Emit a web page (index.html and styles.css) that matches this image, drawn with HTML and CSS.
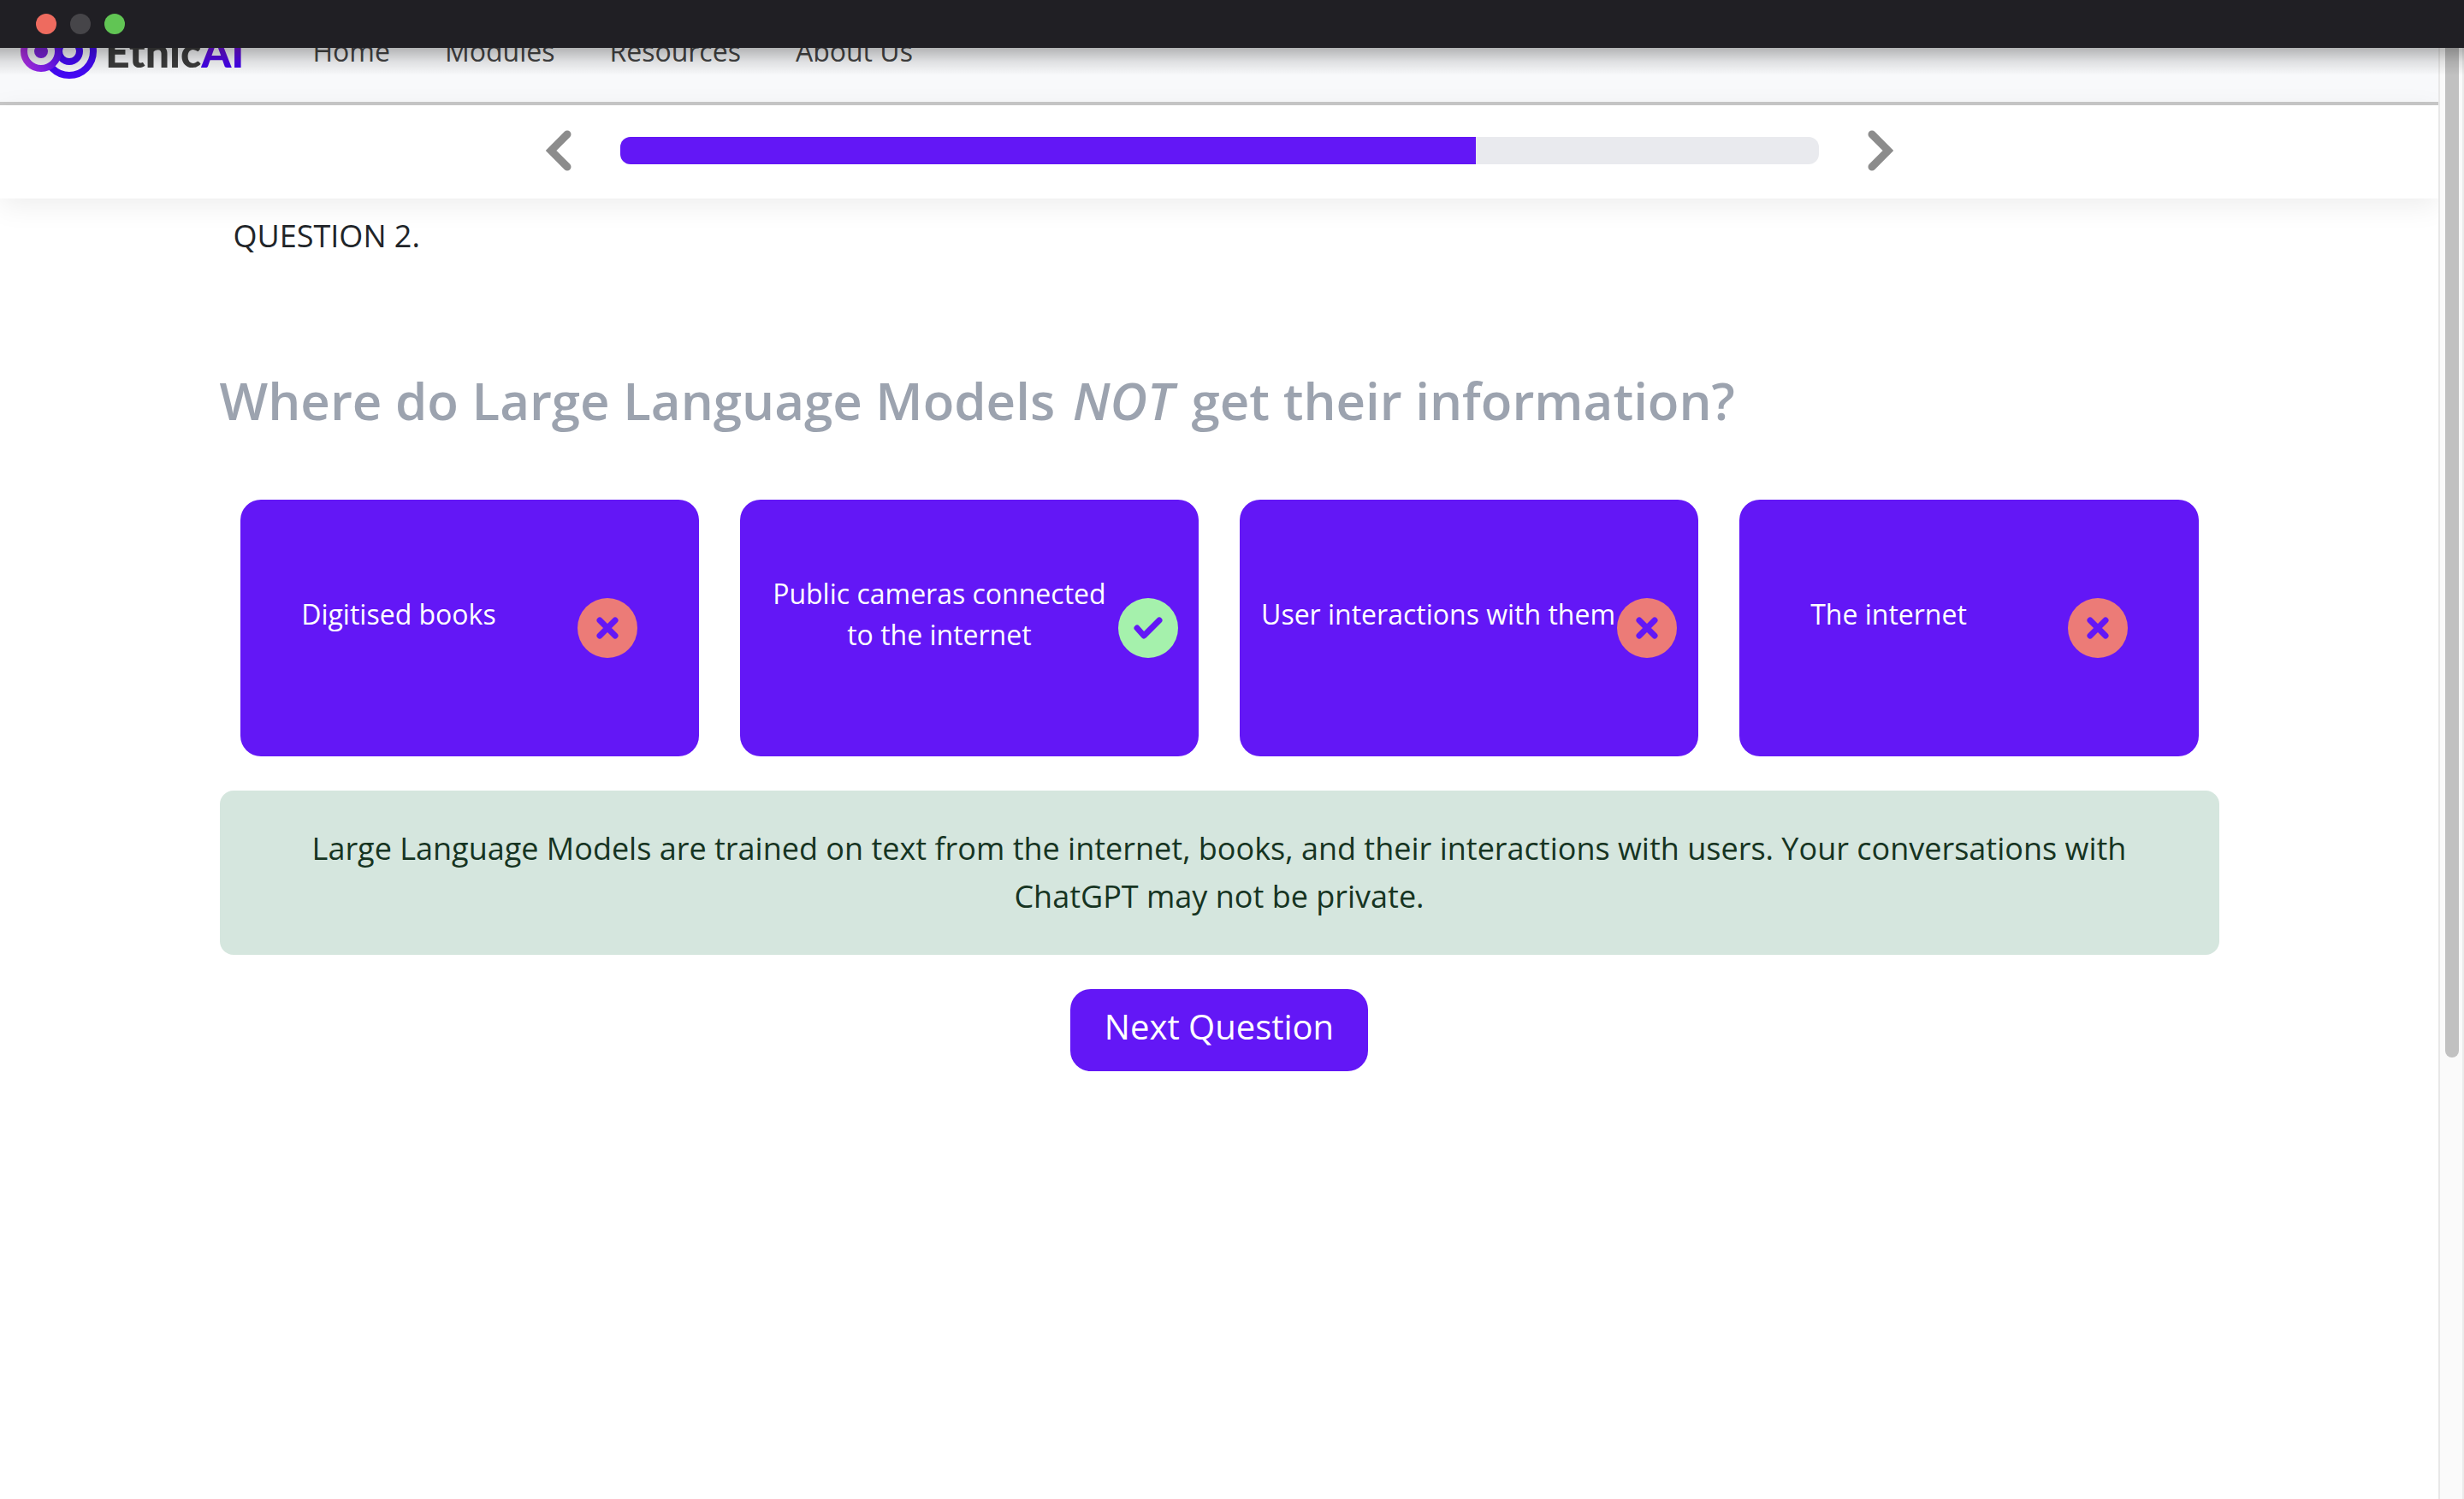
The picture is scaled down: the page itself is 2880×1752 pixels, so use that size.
FILE: index.html
```html
<!DOCTYPE html>
<html lang="en">
<head>
<meta charset="utf-8">
<title>EthicAI</title>
<link rel="stylesheet" href="styles.css">
</head>
<body>
<div class="titlebar">
  <span class="light light-close"></span>
  <span class="light light-min"></span>
  <span class="light light-max"></span>
</div>
<div class="viewport">
  <div class="page">
    <header class="navbar">
      <a class="brand" href="#" aria-label="EthicAI">
        <svg class="logo" width="92" height="66" viewBox="22 27 92 66" aria-hidden="true">
          <defs>
            <linearGradient id="ring" gradientUnits="userSpaceOnUse" x1="24" y1="60" x2="82" y2="60">
              <stop offset="0" stop-color="#b030e0"/><stop offset="1" stop-color="#4a0cf5"/>
            </linearGradient>
          </defs>
          <circle cx="81" cy="60" r="28" fill="none" stroke="#4409f3" stroke-width="8"/>
          <circle cx="81" cy="60" r="12" fill="none" stroke="#4409f3" stroke-width="8"/>
          <circle cx="48" cy="60" r="20" fill="#f1f2f4" stroke="url(#ring)" stroke-width="8"/>
          <circle cx="48" cy="60" r="8" fill="#7a22d8"/>
        </svg>
        <span class="brand-name">Ethic<span class="brand-ai">AI</span></span>
      </a>
      <nav class="links">
        <a href="#">Home</a>
        <a href="#">Modules</a>
        <a href="#">Resources</a>
        <a href="#">About Us</a>
      </nav>
    </header>
    <div class="progress-row">
      <button class="step" aria-label="Previous">
        <svg width="30" height="48" viewBox="0 0 30 48"><path d="M25 5 L6 24 L25 43"/></svg>
      </button>
      <div class="track" role="progressbar" aria-label="Progress"><div class="fill"></div></div>
      <button class="step" aria-label="Next">
        <svg width="30" height="48" viewBox="0 0 30 48"><path d="M5 5 L24 24 L5 43"/></svg>
      </button>
    </div>
    <main class="quiz">
      <p class="count">QUESTION 2.</p>
      <h1 class="question">Where do Large Language Models <em>NOT</em> get their information?</h1>
      <div class="answers">
        <button class="answer"><span class="label">Digitised books</span>
          <span class="mark wrong"><svg width="26" height="26" viewBox="0 0 26 26"><path d="M4 4 L22 22 M22 4 L4 22"/></svg></span></button>
        <button class="answer"><span class="label">Public cameras connected to the internet</span>
          <span class="mark right"><svg width="34" height="26" viewBox="0 0 34 26"><path d="M4 13 L12 22 L30 4"/></svg></span></button>
        <button class="answer"><span class="label">User interactions with them</span>
          <span class="mark wrong"><svg width="26" height="26" viewBox="0 0 26 26"><path d="M4 4 L22 22 M22 4 L4 22"/></svg></span></button>
        <button class="answer"><span class="label">The internet</span>
          <span class="mark wrong"><svg width="26" height="26" viewBox="0 0 26 26"><path d="M4 4 L22 22 M22 4 L4 22"/></svg></span></button>
      </div>
      <p class="feedback">Large Language Models are trained on text from the internet, books, and their interactions with users. Your conversations with ChatGPT may not be private.</p>
      <button class="next">Next Question</button>
    </main>
  </div>
  <div class="scrollbar"><div class="thumb"></div></div>
</div>
</body>
</html>
```
FILE: styles.css
```css
* { box-sizing: border-box; }
body {
  margin: 0;
  height: 100vh;
  display: flex;
  flex-direction: column;
  overflow: hidden;
  background: #fff;
  color: #212529;
  font-family: "Open Sans", "Noto Sans", sans-serif;
}
button { font: inherit; border: 0; cursor: pointer; }

.titlebar {
  height: 56px;
  flex: none;
  display: flex;
  align-items: center;
  gap: 16px;
  padding-left: 42px;
  background: #201f24;
  position: relative;
  z-index: 2;
}
.titlebar::after {
  content: "";
  position: absolute;
  top: 100%;
  left: 0;
  right: 0;
  height: 32px;
  background: linear-gradient(rgba(0,0,0,.28), rgba(0,0,0,.1) 50%, rgba(0,0,0,0));
}
.light { width: 24px; height: 24px; border-radius: 50%; }
.light-close { background: #ee6b5f; }
.light-min { background: #464549; }
.light-max { background: #61c554; }

.viewport { flex: 1; min-height: 0; display: flex; }
.page { flex: 1; min-width: 0; overflow: hidden; }
.scrollbar {
  width: 30px;
  padding: 0 4px 0 6px;
  background: #fafafa;
  border-left: 2px solid #e8e8e8;
  border-right: 2px solid #ebebeb;
}
.thumb { height: 1180px; background: #c1c1c1; border-radius: 0 0 8px 8px; }

/* The page is scrolled, so the top of the navbar sits under the title bar. */
.navbar {
  margin-top: -56px;
  height: 123px;
  display: flex;
  align-items: center;
  gap: 80px;
  padding: 0 22px;
  background: #f8f9fb;
  border-bottom: 4px solid #c8c8c8;
}
.brand { display: flex; align-items: center; gap: 9px; text-decoration: none; }
.brand-name { font: 900 50px/48px Lato, sans-serif; color: #3c3c3c; }
.brand-ai {
  background: linear-gradient(#a020c0, #3a00f0 85%);
  -webkit-background-clip: text;
  background-clip: text;
  color: transparent;
}
.links { display: flex; gap: 64px; font-size: 32px; line-height: 48px; }
.links a { color: #444; text-decoration: none; }

.progress-row {
  height: 109px;
  display: flex;
  align-items: center;
  justify-content: center;
  gap: 57px;
  padding-bottom: 4px;
  background: #fff;
  box-shadow: 0 8px 32px rgba(0,0,0,.075);
}
.step { display: flex; padding: 0; background: none; }
.step path { fill: none; stroke: #8c8c8c; stroke-width: 9; stroke-linecap: round; }
.track { width: 1401px; height: 32px; border-radius: 12px; background: #e9eaee; overflow: hidden; }
.fill { width: 71.4%; height: 100%; background: #6317f6; }

.quiz { width: 82%; margin: 0 auto; padding-top: 16px; display: flex; flex-direction: column; }
.count { margin: 0 16px; font-size: 36px; line-height: 56px; }
.question { margin: 118px 0 70px; font-size: 60px; line-height: 92px; font-weight: 600; color: #9ca3af; }
.question em { margin: 0 5px; }
.answers { display: grid; grid-template-columns: repeat(4, 1fr); gap: 48px; padding: 0 24px; }
.answer {
  height: 300px;
  display: flex;
  align-items: center;
  justify-content: space-around;
  padding: 0 24px;
  border-radius: 24px;
  background: #6317f6;
  color: #fff;
  font-size: 32px;
  line-height: 48px;
}
.label { margin-bottom: 32px; }
.mark { flex: none; width: 70px; height: 70px; border-radius: 50%; display: flex; align-items: center; justify-content: center; }
.mark path { fill: none; stroke: #6317f6; stroke-width: 7; stroke-linecap: round; stroke-linejoin: round; }
.wrong { background: #ec7b77; }
.right { background: #a5f1ac; }
.feedback {
  margin: 40px 0;
  padding: 40px 64px;
  border-radius: 16px;
  background: #d5e6de;
  color: #163422;
  font-size: 36px;
  line-height: 56px;
  text-align: center;
}
.next { align-self: center; height: 96px; padding: 0 40px 10px; border-radius: 24px; background: #6317f6; color: #fff; font-size: 40px; }
```
